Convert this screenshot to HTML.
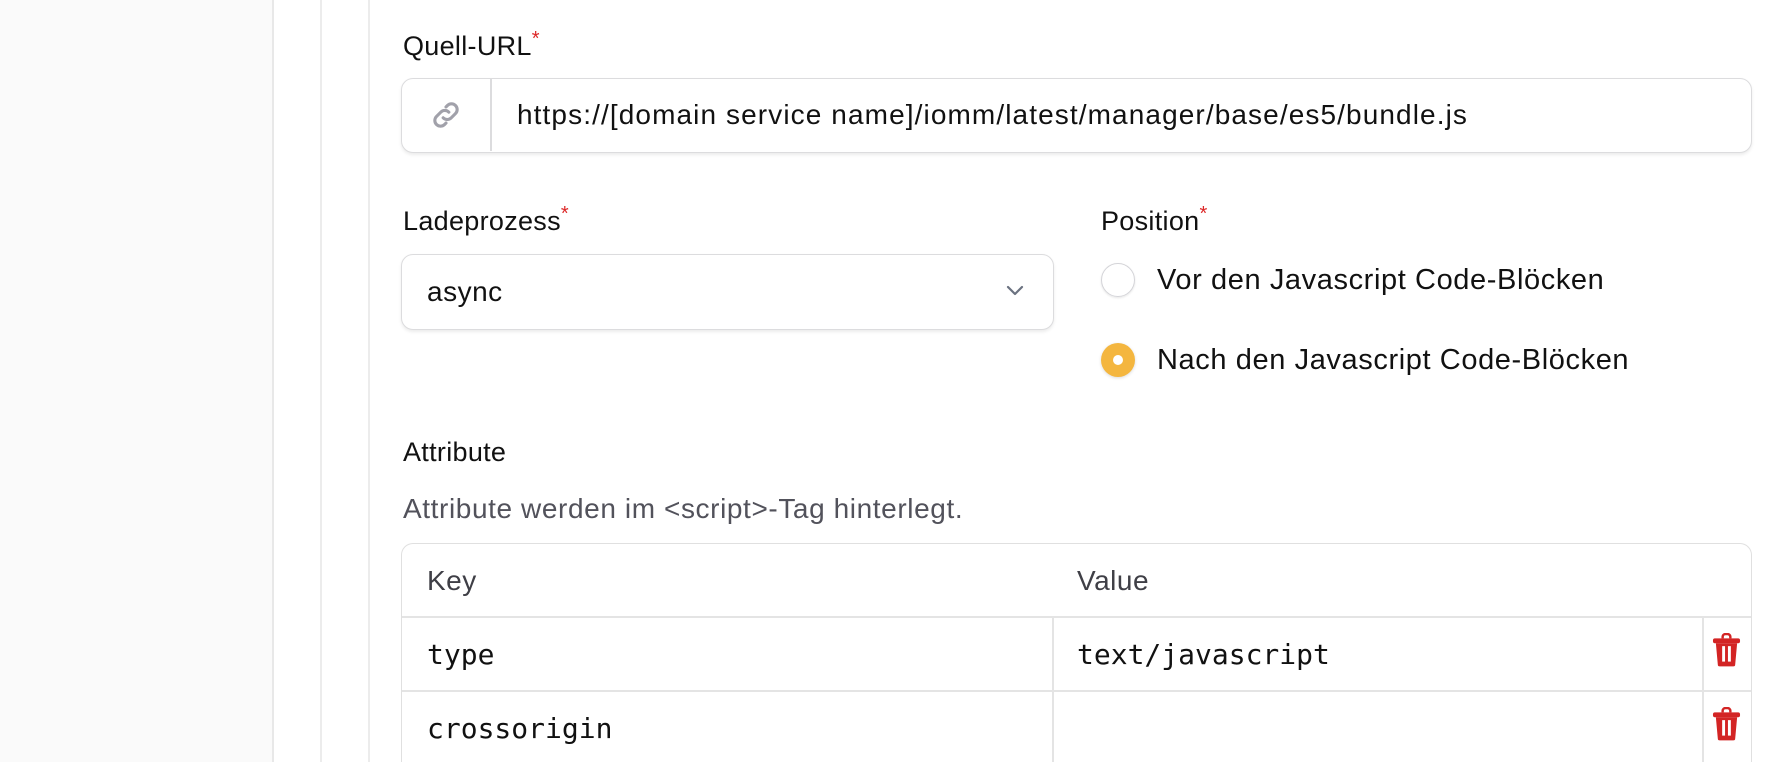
<!DOCTYPE html>
<html><head><meta charset="utf-8"><style>
*{box-sizing:border-box;margin:0;padding:0}
html,body{width:1780px;height:762px;overflow:hidden}
body{background:#fff;font-family:"Liberation Sans",Arial,sans-serif;color:#111;position:relative}
.abs{position:absolute}
.lbl{font-size:27px;color:#111;white-space:nowrap;letter-spacing:0.3px}
.lbl sup{color:#dc2626;font-size:20px;position:relative;top:-3px;vertical-align:top}
.t{font-size:28px;white-space:nowrap;letter-spacing:0.5px}
.box{border:1.5px solid #dcdcde;border-radius:12px;box-shadow:0 2px 3px rgba(0,0,0,.08);background:#fff}
.mono{font-family:"DejaVu Sans Mono","Liberation Mono",monospace;font-size:28px}
</style></head><body>
<div class="abs" style="left:0;top:0;width:274px;height:762px;background:#fafafa;border-right:2px solid #e8e8e8"></div>
<div class="abs" style="left:320px;top:0;width:2px;height:762px;background:#ececec"></div>
<div class="abs" style="left:368px;top:0;width:2px;height:762px;background:#ececec"></div>

<div class="abs lbl" style="left:403px;top:31px">Quell-URL<sup>*</sup></div>
<div class="abs box" style="left:401px;top:78px;width:1351px;height:75px">
  <div class="abs" style="left:88px;top:0;width:1.5px;height:72px;background:#dcdcde"></div>
  <svg class="abs" style="left:27px;top:19px" width="34" height="34" viewBox="0 0 24 24" fill="none" stroke="#a1a1aa" stroke-width="2.2" stroke-linecap="round"><path d="M10 14a4 4 0 0 0 5.7 0l3-3a4 4 0 0 0-5.7-5.7l-1 1"/><path d="M14 10a4 4 0 0 0-5.7 0l-3 3a4 4 0 0 0 5.7 5.7l1-1"/></svg>
  <div class="abs t" style="left:115px;top:20px;letter-spacing:1.1px">https://[domain service name]/iomm/latest/manager/base/es5/bundle.js</div>
</div>

<div class="abs lbl" style="left:403px;top:206px">Ladeprozess<sup>*</sup></div>
<div class="abs box" style="left:401px;top:254px;width:653px;height:76px">
  <div class="abs t" style="left:25px;top:21px">async</div>
  <svg class="abs" style="left:603px;top:28px" width="20" height="14" viewBox="0 0 20 14" fill="none" stroke="#6b7280" stroke-width="2.2" stroke-linecap="round" stroke-linejoin="round"><path d="M3 4l7 7 7-7"/></svg>
</div>

<div class="abs lbl" style="left:1101px;top:206px">Position<sup>*</sup></div>
<div class="abs" style="left:1101px;top:263px;width:34px;height:34px;border-radius:50%;border:1.5px solid #d4d4d8;box-shadow:0 1px 2px rgba(0,0,0,.1)"></div>
<div class="abs t" style="left:1157px;top:264px;font-size:29px;letter-spacing:0.6px">Vor den Javascript Code-Blöcken</div>
<div class="abs" style="left:1101px;top:343px;width:34px;height:34px;border-radius:50%;background:#f4b63f;box-shadow:0 1px 3px rgba(0,0,0,.15)"></div>
<div class="abs" style="left:1113px;top:355px;width:10px;height:10px;border-radius:50%;background:#fff"></div>
<div class="abs t" style="left:1157px;top:344px;font-size:29px;letter-spacing:0.6px">Nach den Javascript Code-Blöcken</div>

<div class="abs lbl" style="left:403px;top:437px">Attribute</div>
<div class="abs t" style="left:403px;top:493px;color:#52525b;font-size:28px;letter-spacing:0.6px">Attribute werden im &lt;script&gt;-Tag hinterlegt.</div>

<div class="abs" style="left:401px;top:543px;width:1351px;height:219px;border:1.5px solid #e0e0e0;border-bottom:none;border-radius:12px 12px 0 0">
  <div class="abs t" style="left:25px;top:21px;color:#3f3f46">Key</div>
  <div class="abs t" style="left:675px;top:21px;color:#3f3f46">Value</div>
  <div class="abs" style="left:0;top:72px;width:1349px;height:2px;background:#e4e4e4"></div>
  <div class="abs" style="left:0;top:146px;width:1349px;height:2px;background:#e4e4e4"></div>
  <div class="abs" style="left:650px;top:73px;width:2px;height:146px;background:#e4e4e4"></div>
  <div class="abs" style="left:1300px;top:73px;width:2px;height:146px;background:#e4e4e4"></div>
  <div class="abs mono" style="left:25px;top:94px">type</div>
  <div class="abs mono" style="left:675px;top:94px">text/javascript</div>
  <div class="abs mono" style="left:25px;top:168px">crossorigin</div>
</div>
<svg class="abs" style="left:1712px;top:633px" width="29" height="34" viewBox="0 0 30 34"><path d="M11 5V3.5a3 3 0 0 1 3-3h2a3 3 0 0 1 3 3V5" fill="none" stroke="#d32424" stroke-width="2.5"/><rect x="1" y="5" width="28" height="5" rx="2" fill="#d32424"/><path d="M4 10h22l-2 22a2 2 0 0 1-2 2H8a2 2 0 0 1-2-2z" fill="#d32424"/><rect x="10.5" y="13" width="3" height="16" fill="#fff"/><rect x="16.5" y="13" width="3" height="16" fill="#fff"/></svg>
<svg class="abs" style="left:1712px;top:707px" width="29" height="34" viewBox="0 0 30 34"><path d="M11 5V3.5a3 3 0 0 1 3-3h2a3 3 0 0 1 3 3V5" fill="none" stroke="#d32424" stroke-width="2.5"/><rect x="1" y="5" width="28" height="5" rx="2" fill="#d32424"/><path d="M4 10h22l-2 22a2 2 0 0 1-2 2H8a2 2 0 0 1-2-2z" fill="#d32424"/><rect x="10.5" y="13" width="3" height="16" fill="#fff"/><rect x="16.5" y="13" width="3" height="16" fill="#fff"/></svg>
</body></html>
